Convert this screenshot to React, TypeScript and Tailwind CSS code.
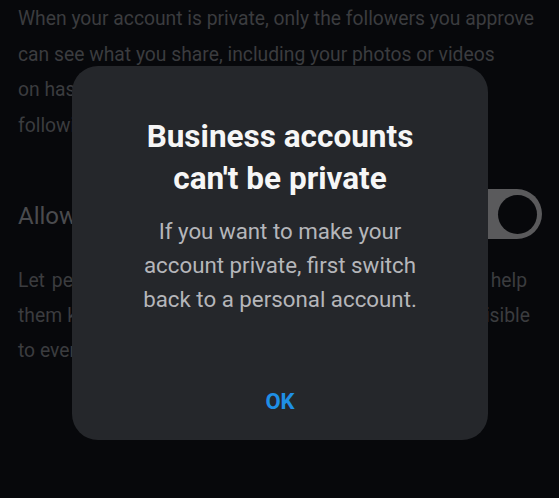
import React from 'react';

const lineJustify = 'block whitespace-nowrap text-justify [text-align-last:justify]';

const SettingsBehind: React.FC = () => {
  return (
    <div className="pt-[1px] pl-[18px] pr-[17px] font-['Roboto',sans-serif]">
      <div className="text-[19.3px] leading-[35.5px] text-[#3b3c3f]">
        <span className="block whitespace-nowrap">When your account is private, only the followers you approve</span>
        <span className="block whitespace-nowrap">can see what you share, including your photos or videos</span>
        <span className="block whitespace-nowrap">on hashtag and location pages, and your followers and</span>
        <span className="block whitespace-nowrap">following lists.</span>
      </div>

      <div className="mt-[46px] flex h-[50px] items-start justify-between">
        <span className="pt-[2px] text-[24px] leading-[50px] text-[#4a4b4e]">Allow Activity Status</span>
        <div className="flex h-[50px] w-[96px] items-center justify-end rounded-full bg-[#5a5a5c] pr-[5px]">
          <div className="h-[39px] w-[39px] rounded-full bg-[#07080b]" />
        </div>
      </div>

      <div className="mt-[24px] pr-[12px] text-[19.3px] leading-[35px] text-[#3b3c3f]">
        <span className={`${lineJustify} mr-[3px]`}>Let people who follow you see when you're online, to help</span>
        <span className={lineJustify}>them know when you're around. Your active status is visible</span>
        <span className="block whitespace-nowrap">to everyone you follow and message.</span>
      </div>
    </div>
  );
};

const PrivateDialog: React.FC = () => {
  return (
    <div className="absolute left-[72px] top-[66px] flex h-[374px] w-[416px] flex-col items-center rounded-[26px] bg-[#25272b] pt-[50px] font-['Roboto',sans-serif]">
      <h2 className="text-center text-[31.5px] font-bold leading-[42px] text-[#f6f6f6]">
        Business accounts
        <br />
        can't be private
      </h2>
      <p className="mt-[14px] text-center text-[22.3px] leading-[34px] text-[#b5b6ba]">
        If you want to make your
        <br />
        account private, first switch
        <br />
        back to a personal account.
      </p>
      <button className="mt-[73px] text-[22px] font-bold leading-[26px] text-[#1f8fe6]">OK</button>
    </div>
  );
};

export default function App() {
  return (
    <div className="relative h-[498px] w-[559px] overflow-hidden bg-[#07080b]">
      <SettingsBehind />
      <PrivateDialog />
    </div>
  );
}
